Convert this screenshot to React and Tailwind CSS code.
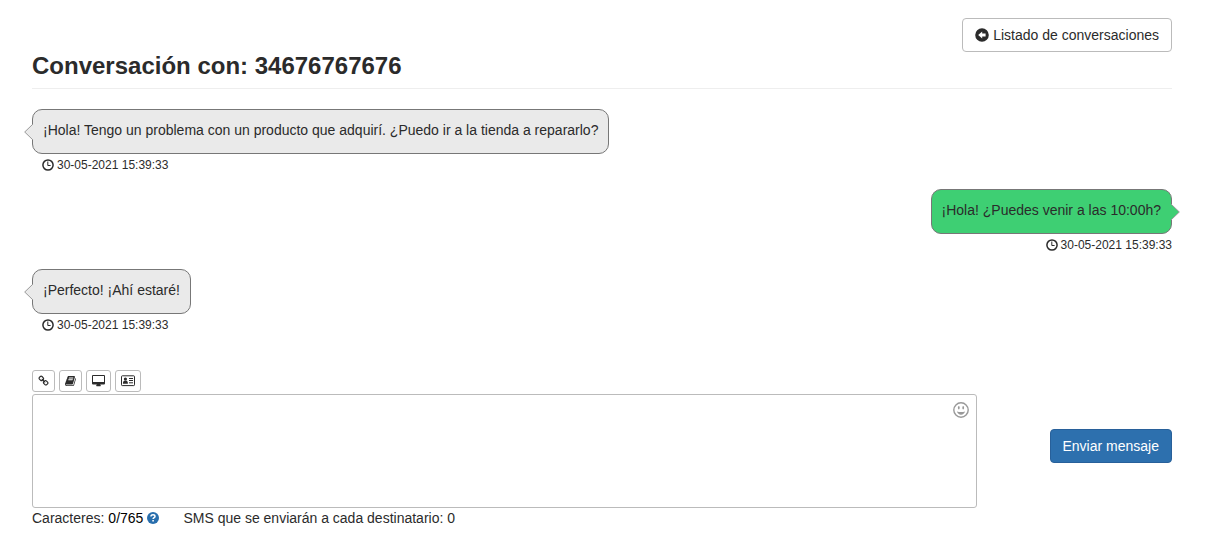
import { useState } from 'react';
import clsx from 'clsx';

const messages = [
  {
    id: 1,
    text: '¡Hola! Tengo un problema con un producto que adquirí. ¿Puedo ir a la tienda a repararlo?',
    date: '30-05-2021 15:39:33',
    own: false,
  },
  { id: 2, text: '¡Hola! ¿Puedes venir a las 10:00h?', date: '30-05-2021 15:39:33', own: true },
  { id: 3, text: '¡Perfecto! ¡Ahí estaré!', date: '30-05-2021 15:39:33', own: false },
];

const ArrowLeftIcon = () => (
  <svg viewBox="0 0 14 14" className="size-[14px]" aria-hidden="true">
    <path
      fillRule="evenodd"
      fill="currentColor"
      d="M7 .2a6.8 6.8 0 1 1 0 13.6A6.8 6.8 0 0 1 7 .2zM7.2 3.4L3.2 7l4 3.6V8.4h3.4V5.6H7.2z"
    />
  </svg>
);

const ClockIcon = () => (
  <svg viewBox="0 0 12 12" className="size-3" aria-hidden="true">
    <circle cx="6" cy="6" r="5.1" fill="none" stroke="currentColor" strokeWidth="1.5" />
    <path d="M5.8 2.5V6.5H8.6" fill="none" stroke="currentColor" strokeWidth="1" />
  </svg>
);

const LinkIcon = () => (
  <svg viewBox="0 0 1792 1792" className="h-3 w-[11px]" fill="currentColor" aria-hidden="true">
    <path d="M1520 1216q0-40-28-68l-208-208q-28-28-68-28-42 0-72 32 3 3 19 18.5t21.5 21.5 15 19 13 25.5 3.5 27.5q0 40-28 68t-68 28q-15 0-27.5-3.5t-25.5-13-19-15-21.5-21.5-18.5-19q-33 31-33 73 0 40 28 68l206 207q27 27 68 27 40 0 68-26l147-146q28-28 28-67zm-703-705q0-40-28-68l-206-207q-28-28-68-28-39 0-68 27l-147 146q-28 28-28 67 0 40 28 68l208 208q27 27 68 27 42 0 72-31-3-3-19-18.5t-21.5-21.5-15-19-13-25.5-3.5-27.5q0-40 28-68t68-28q15 0 27.5 3.5t25.5 13 19 15 21.5 21.5 18.5 19q33-31 33-73zm895 705q0 120-85 203l-147 146q-83 83-203 83-121 0-204-85l-206-207q-83-83-83-203 0-123 88-209l-88-88q-86 88-208 88-120 0-204-84l-208-208q-84-84-84-204t85-203l147-146q83-83 203-83 121 0 204 85l206 207q83 83 83 203 0 123-88 209l88 88q86-88 208-88 120 0 204 84l208 208q84 84 84 204z" />
  </svg>
);

const BookIcon = () => (
  <svg viewBox="0 0 1664 1792" className="h-3 w-[11px]" fill="currentColor" aria-hidden="true">
    <path d="M1639 478q40 57 18 129l-275 906q-19 64-76.5 107.5t-122.5 43.5h-923q-77 0-148.5-53.5t-99.5-131.5q-24-67-2-127 0-4 3-27t4-37q1-8-3-21.5t-3-19.5q2-11 8-21t16.5-23.5 16.5-23.5q23-38 45-91.5t30-91.5q3-10 .5-30t-.5-28q3-11 17-28t17-23q21-36 42-92t25-90q1-9-2.5-32t.5-28q4-13 22-30.5t22-22.5q19-26 42.5-84.5t27.5-96.5q1-8-3-25.5t-2-26.5q2-8 9-18t18-23 17-21q8-12 16.5-30.5t15-35 16-36 19.5-32 26.5-23.5 36-11.5 47.5 5.5l-1 3q38-9 51-9h761q74 0 114 56t18 130l-274 906q-36 119-71.5 153.5t-128.5 34.5h-869q-27 0-38 15-11 16-1 43 24 70 144 70h923q29 0 56-15.5t35-41.5l300-987q7-22 5-57 38 15 59 43zm-1064 2q-4 13 2 22.5t20 9.5h608q13 0 25.5-9.5t16.5-22.5l21-64q4-13-2-22.5t-20-9.5h-608q-13 0-25.5 9.5t-16.5 22.5zm-83 256q-4 13 2 22.5t20 9.5h608q13 0 25.5-9.5t16.5-22.5l21-64q4-13-2-22.5t-20-9.5h-608q-13 0-25.5 9.5t-16.5 22.5z" />
  </svg>
);

const ScreenIcon = () => (
  <svg viewBox="0 0 13 12" className="h-3 w-[13px]" fill="currentColor" aria-hidden="true">
    <path
      fillRule="evenodd"
      d="M1 0h11a1 1 0 0 1 1 1v7.4a1 1 0 0 1-1 1H8.2l.6 1.2q.2.6-.5.6H4.7q-.7 0-.5-.6l.6-1.2H1a1 1 0 0 1-1-1V1a1 1 0 0 1 1-1zm0 1v6h11V1z"
    />
  </svg>
);

const CardIcon = () => (
  <svg viewBox="0 0 14 12" className="h-3 w-[14px]" aria-hidden="true">
    <rect x=".5" y=".8" width="13" height="9.8" rx=".8" fill="none" stroke="currentColor" />
    <circle cx="4.4" cy="4" r="1.6" fill="currentColor" />
    <path d="M1.9 8.7c0-2.2.8-3.2 2.5-3.2s2.5 1 2.5 3.2z" fill="currentColor" />
    <path d="M8 3.5h4M8 5.5h4M8 7.8h4" stroke="currentColor" />
  </svg>
);

const SmileIcon = () => (
  <svg viewBox="0 0 16 16" className="size-4" aria-hidden="true">
    <circle cx="8" cy="8" r="7.2" fill="none" stroke="currentColor" strokeWidth="1.4" />
    <ellipse cx="5.8" cy="5.8" rx=".9" ry="1.8" fill="currentColor" />
    <ellipse cx="10.2" cy="5.8" rx=".9" ry="1.8" fill="currentColor" />
    <path d="M3.9 9.5q4.1 1 8.2 0c-.6 2-2.2 3.2-4.1 3.2s-3.5-1.2-4.1-3.2z" fill="currentColor" />
  </svg>
);

const HelpIcon = () => (
  <svg viewBox="0 0 12 12" className="size-3" aria-hidden="true">
    <circle cx="6" cy="6" r="6" fill="currentColor" />
    <path d="M4 4.6C4 3.3 4.8 2.7 6 2.7s2 .7 2 1.7c0 1.3-1.9 1.3-1.9 2.7" fill="none" stroke="#fff" strokeWidth="1.5" />
    <path d="M5.3 8h1.6v1.5H5.3z" fill="#fff" />
  </svg>
);

const tools = [
  { name: 'Insertar enlace', Icon: LinkIcon },
  { name: 'Plantillas', Icon: BookIcon },
  { name: 'Landing pages', Icon: ScreenIcon },
  { name: 'Datos de contacto', Icon: CardIcon },
];

const Message = ({ text, date, own }) => (
  <li className={clsx('flex flex-col', own ? 'items-end' : 'items-start')}>
    <div
      className={clsx(
        'relative rounded-[10px] border border-[#777] px-[10px] pt-[10px] pb-[13px]',
        own ? 'bg-[#3ecf73]' : 'bg-[#eaeaea]'
      )}
    >
      <p>{text}</p>
      <svg
        viewBox="0 0 9 16"
        className={clsx('absolute top-[14px] h-4 w-[9px]', own ? '-right-[9px] -scale-x-100' : '-left-[9px]')}
        aria-hidden="true"
      >
        <path d="M9 0L.7 8L9 16z" className={own ? 'fill-[#3ecf73]' : 'fill-[#eaeaea]'} />
        <path d="M9 0L.7 8L9 16" fill="none" stroke="#999" />
      </svg>
    </div>
    <p className={clsx('flex items-center gap-[3px] pt-[1px] text-xs leading-5', !own && 'pl-[10px]')}>
      <ClockIcon />
      <time>{date}</time>
    </p>
  </li>
);

const App = () => {
  const [text, setText] = useState('');

  return (
    <main className="bg-white pt-[18px] pr-[34px] pb-5 pl-8 font-['Liberation_Sans',Arial,sans-serif] text-sm leading-5 text-[#2b2b2b]">
      <header className="flex flex-col border-b border-[#eee] pb-2">
        <a
          href="#conversaciones"
          className="flex items-center gap-1 self-end rounded border border-[#bbb] bg-white px-3 py-[6px]"
        >
          <ArrowLeftIcon />
          Listado de conversaciones
        </a>
        <h1 className="text-2xl leading-7 font-bold">Conversación con: 34676767676</h1>
      </header>

      <ul className="flex flex-col gap-[14px] pt-5">
        {messages.map((message) => (
          <Message key={message.id} text={message.text} date={message.date} own={message.own} />
        ))}
      </ul>

      <form className="grid grid-cols-12 gap-x-[30px] pt-[35px]" onSubmit={(e) => e.preventDefault()}>
        <div className="col-span-10">
          <div className="flex gap-1 pb-[2px]">
            {tools.map(({ name, Icon }) => (
              <button
                key={name}
                type="button"
                aria-label={name}
                className="flex h-[22px] items-center rounded-[3px] border border-[#bbb] bg-white px-[5px]"
              >
                <Icon />
              </button>
            ))}
          </div>
          <div className="relative">
            <textarea
              aria-label="Mensaje"
              value={text}
              onChange={(e) => setText(e.target.value)}
              className="block h-[114px] w-full resize-none rounded-[3px] border border-[#bbb] py-[6px] pr-8 pl-3"
            />
            <button type="button" aria-label="Emoticonos" className="absolute top-2 right-2 text-[#999]">
              <SmileIcon />
            </button>
          </div>
          <div className="flex gap-6">
            <p className="flex items-center gap-1">
              Caracteres: <span className="text-black">{text.length}/765</span>
              <span className="text-[#286ead]">
                <HelpIcon />
              </span>
            </p>
            <p>SMS que se enviarán a cada destinatario: {text ? 1 : 0}</p>
          </div>
        </div>
        <div className="col-span-2 flex items-start justify-end pt-[59px]">
          <button
            type="submit"
            className="rounded border border-[#28609a] bg-[#2d70ae] px-3 py-[6px] whitespace-nowrap text-white"
          >
            Enviar mensaje
          </button>
        </div>
      </form>
    </main>
  );
};

export default App;
